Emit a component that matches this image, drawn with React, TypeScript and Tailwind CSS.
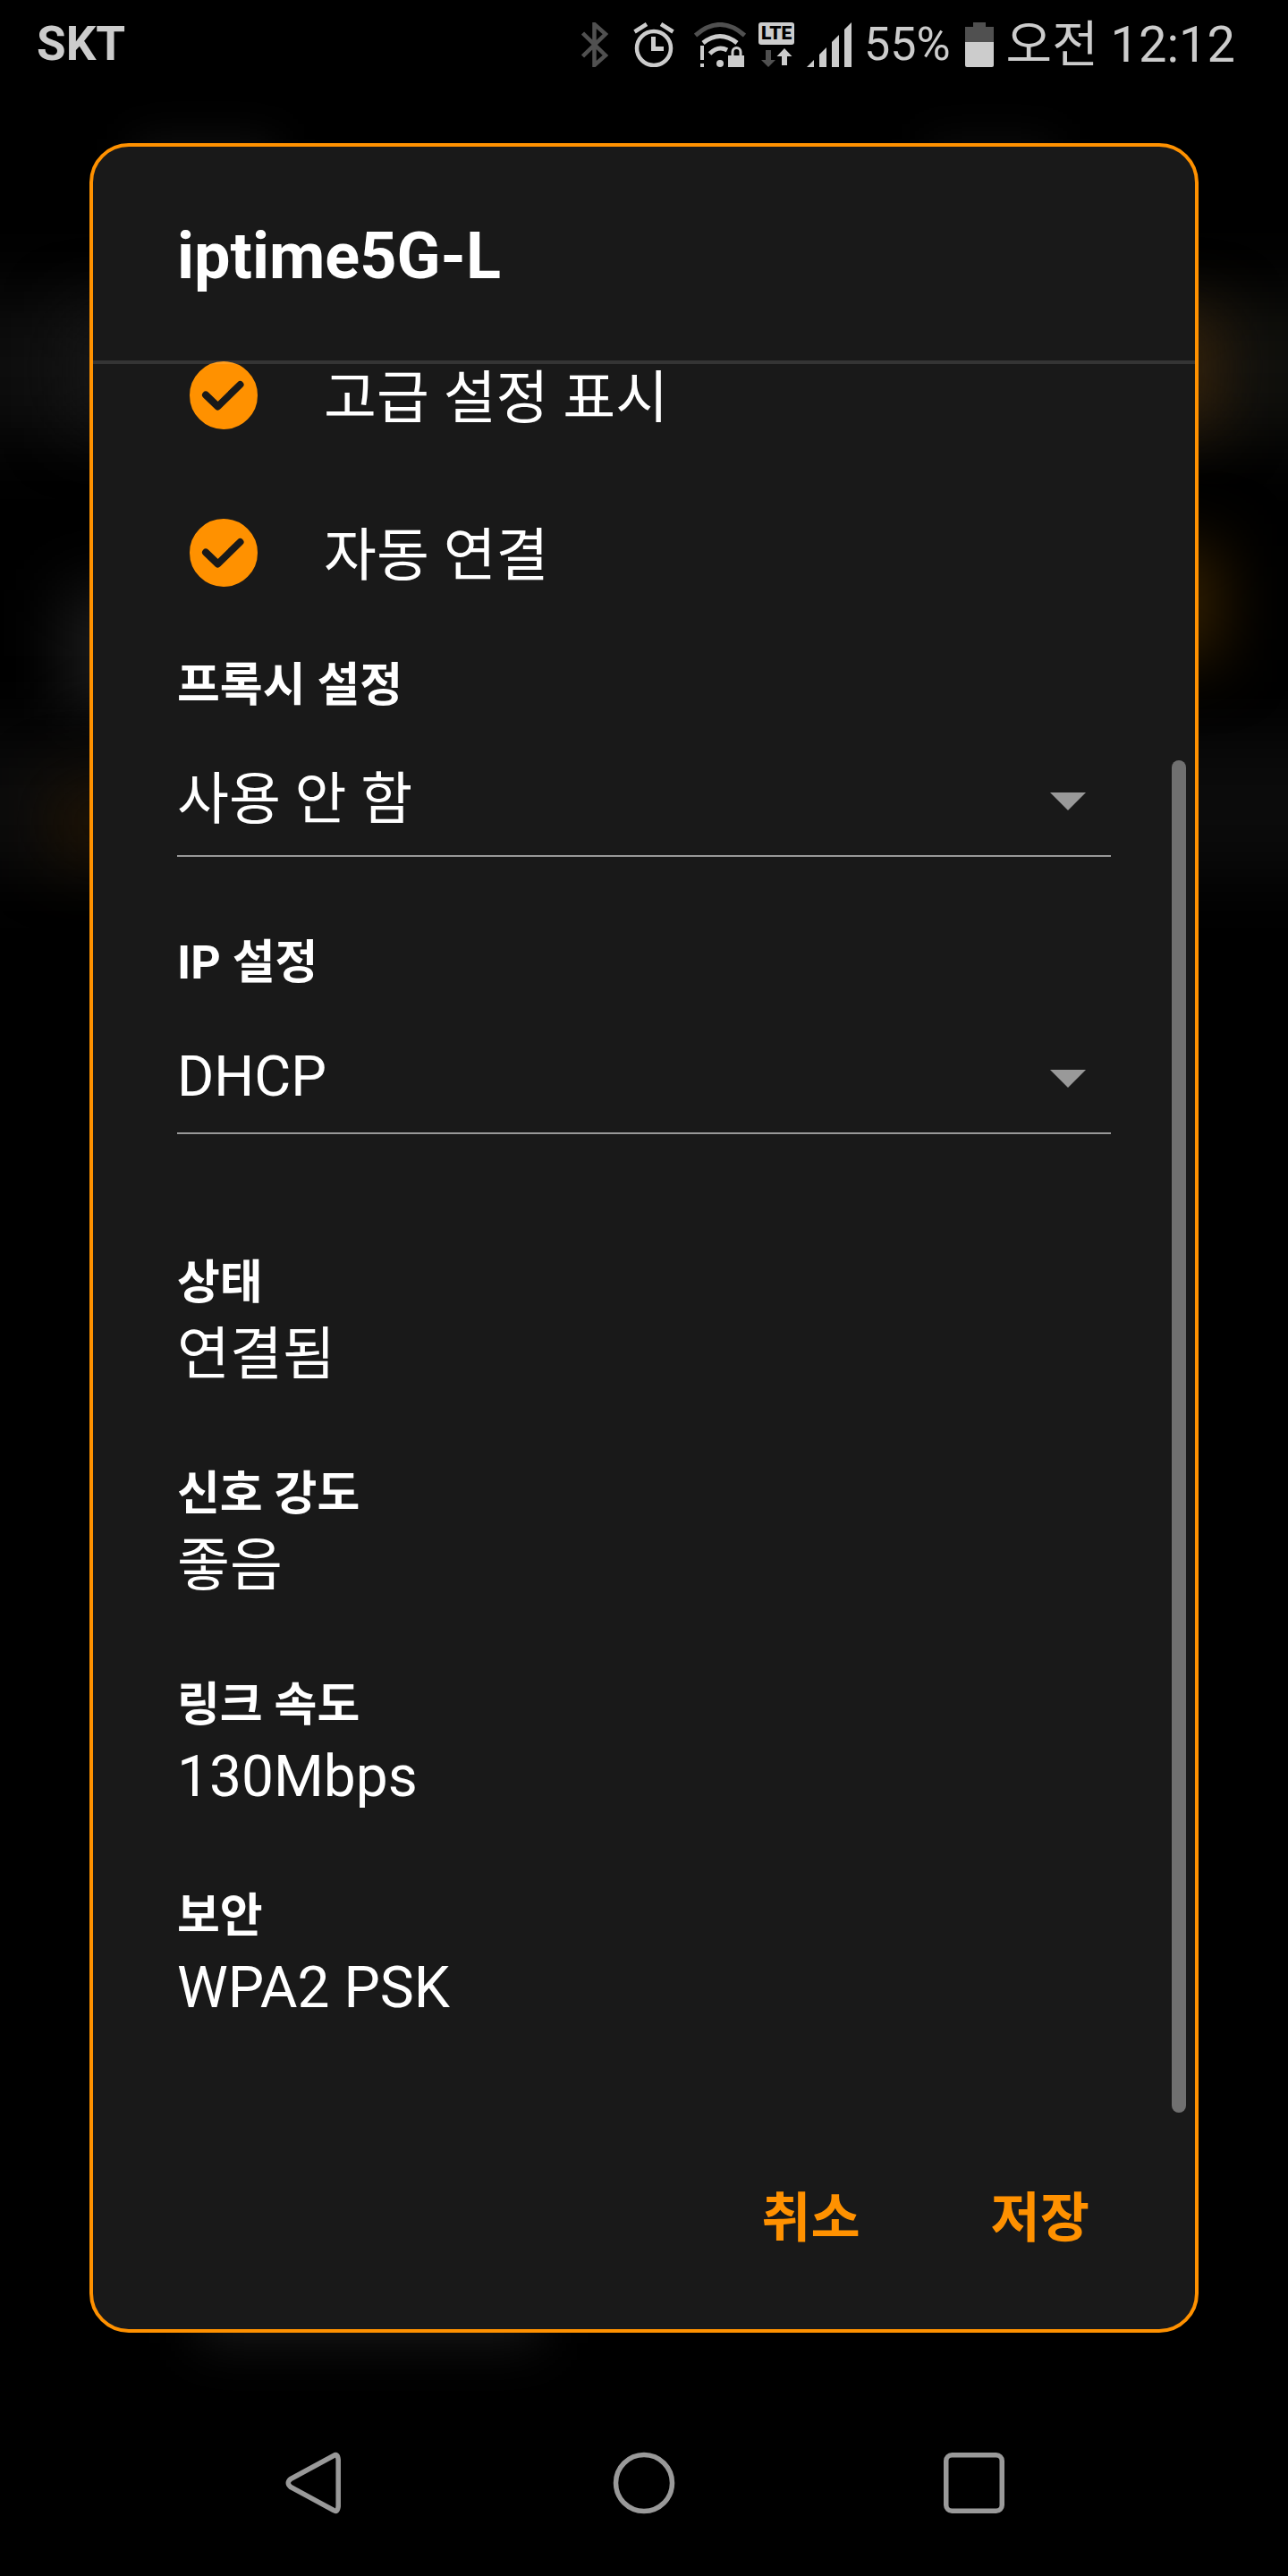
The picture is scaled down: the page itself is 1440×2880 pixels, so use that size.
import { useState } from 'react'

const fontStack = "font-['Roboto','Noto_Sans_CJK_KR',sans-serif]"

const connectionInfo = [
  { label: '상태', value: '연결됨' },
  { label: '신호 강도', value: '좋음' },
  { label: '링크 속도', value: '130Mbps' },
  { label: '보안', value: 'WPA2 PSK' },
]

function BluetoothIcon() {
  return (
    <svg width="30" height="50" viewBox="0 0 30 50" fill="none" stroke="#505050" strokeWidth="4.5" aria-hidden="true">
      <path d="M1.5 12 27 37 14.5 48V2L27 13 1.5 38" />
    </svg>
  )
}

function AlarmIcon() {
  return (
    <svg width="46" height="50" viewBox="0 0 46 50" fill="none" stroke="#cccccc" strokeWidth="4.5" aria-hidden="true">
      <circle cx="23" cy="29" r="19" />
      <path d="M1.5 10.5 15 2M31 2l13.500 8.500" />
      <path d="M22.500 16v13.500H34" strokeWidth="5" />
    </svg>
  )
}

function WifiIcon() {
  return (
    <svg width="58" height="50" viewBox="0 0 58 50" fill="none" aria-hidden="true">
      <path d="M1.500 14.500Q29-9.500 56.500 14.500" stroke="#505050" strokeWidth="5" />
      <path d="M10 23Q29 8 48 23" stroke="#cccccc" strokeWidth="5" />
      <path d="M17.500 35Q27 25.500 37 31" stroke="#cccccc" strokeWidth="5" />
      <circle cx="29" cy="46" r="4" fill="#cccccc" />
      <path d="M7 26h4v16H7zM7 46h4v4H7z" fill="#cccccc" />
      <path d="M43 38v-5a4.500 4.500 0 0 1 9 0v5" stroke="#cccccc" strokeWidth="3" />
      <path d="M38 37h18v13H38z" fill="#cccccc" />
    </svg>
  )
}

function LteIcon() {
  return (
    <div className="flex h-[50px] w-10 flex-col justify-between">
      <span className="flex h-[25px] items-center justify-center rounded-[3px] bg-[#cccccc] text-[21px] leading-[25px] font-black text-black">
        LTE
      </span>
      <svg width="40" height="21" viewBox="0 0 40 21" aria-hidden="true">
        <path d="M8 2h6v11h5l-8 8-8-8h5z" fill="#505050" />
        <path d="M26 19h6V9h5.500L29 0l-8.500 9H26z" fill="#cccccc" />
      </svg>
    </div>
  )
}

function SignalIcon() {
  return (
    <svg width="50" height="50" viewBox="0 0 50 50" fill="#cccccc" aria-hidden="true">
      <path d="M0 50 8 42v8zM14 50V36l8-8v22zM28 50V22l8-8v36zM42 50V8l8-8v50z" />
    </svg>
  )
}

function BatteryIcon() {
  return (
    <svg width="32" height="50" viewBox="0 0 32 50" aria-hidden="true">
      <path d="M9 0h14v5h9v17H0V5h9z" fill="#505050" />
      <path d="M0 22h32v26a2 2 0 0 1-2 2H2a2 2 0 0 1-2-2z" fill="#cccccc" />
    </svg>
  )
}

function StatusBar() {
  return (
    <header className="flex h-[100px] items-center justify-between pr-[59px] pl-[41px] text-[#cccccc]">
      <span className="text-[53px] font-bold">SKT</span>
      <div className="flex items-center gap-3.5">
        <div className="mr-2 flex items-center gap-7">
          <BluetoothIcon />
          <AlarmIcon />
        </div>
        <WifiIcon />
        <LteIcon />
        <SignalIcon />
        <span className="pr-0.5 text-[52px]">55%</span>
        <BatteryIcon />
        <span className="text-[56px]">오전 12:12</span>
      </div>
    </header>
  )
}

/* Blurred remains of the screen underneath the dialog */
function Backdrop() {
  return (
    <div className="absolute inset-0 -z-10 overflow-hidden" aria-hidden="true">
      <div className="absolute top-[330px] -left-20 h-40 w-1/2 bg-[#0e0e0e] blur-[40px]" />
      <div className="absolute top-[350px] left-[80px] h-32 w-80 bg-[#181818] blur-[36px]" />
      <div className="absolute top-[660px] left-[75px] h-36 w-80 bg-[#1e1e1e] blur-[36px]" />
      <div className="absolute top-[820px] -left-20 h-40 w-[120%] bg-[#0b0b0b] blur-[36px]" />
      <div className="absolute top-[880px] left-[60px] h-20 w-80 bg-[#211404] blur-[36px]" />
      <div className="absolute top-[330px] -right-20 h-40 w-1/2 bg-[#10100d] blur-[40px]" />
      <div className="absolute top-[350px] right-[80px] h-32 w-80 bg-[#38240b] blur-[36px]" />
      <div className="absolute top-[610px] right-[76px] h-32 w-80 bg-[#342000] blur-[36px]" />
      <div className="absolute top-[155px] left-[150px] h-20 w-40 bg-[#101010] blur-[24px]" />
      <div className="absolute top-[155px] right-[260px] h-20 w-36 bg-[#0c0c0c] blur-[24px]" />
      <div className="absolute top-[2540px] left-[220px] h-20 w-96 bg-[#181818] blur-[28px]" />
    </div>
  )
}

function CheckRow({ id, label }: { id: string; label: string }) {
  const [checked, setChecked] = useState(true)

  return (
    <label htmlFor={id} className="flex h-[78px] items-center gap-[74px] pl-3.5 text-[64px] leading-[78px]">
      <span className="relative size-[76px] shrink-0">
        <input
          id={id}
          type="checkbox"
          checked={checked}
          onChange={(e) => setChecked(e.target.checked)}
          className="block size-[76px] appearance-none rounded-full border-4 border-[#999999] checked:border-[#ff9100] checked:bg-[#ff9100]"
        />
        {checked && (
          <svg
            className="pointer-events-none absolute inset-0"
            viewBox="0 0 76 76"
            fill="none"
            stroke="#191919"
            strokeWidth="8"
            strokeLinecap="round"
            strokeLinejoin="round"
            aria-hidden="true"
          >
            <path d="M18 37.500 31.500 50.500 56.500 26" />
          </svg>
        )}
      </span>
      <span className="pt-2">{label}</span>
    </label>
  )
}

function SelectField({ id, label, options }: { id: string; label: string; options: string[] }) {
  return (
    <div className="flex flex-col gap-9">
      <label htmlFor={id} className="text-[52px] leading-[60px] font-bold">
        {label}
      </label>
      <div className="relative">
        <select
          id={id}
          defaultValue={options[0]}
          className="block h-[125px] w-full appearance-none border-b-2 border-[#999999] bg-transparent text-[63px] text-white outline-none"
        >
          {options.map((option) => (
            <option key={option} className="bg-[#191919]">
              {option}
            </option>
          ))}
        </select>
        <svg
          className="pointer-events-none absolute top-1/2 right-7 -translate-y-1/2"
          width="40"
          height="20"
          viewBox="0 0 40 20"
          fill="#999999"
          aria-hidden="true"
        >
          <path d="M0 0h40L20 20z" />
        </svg>
      </div>
    </div>
  )
}

function WifiDialog() {
  return (
    <section
      role="dialog"
      aria-labelledby="network-name"
      className="mx-[100px] mt-[60px] mb-16 rounded-[44px] border-4 border-[#ff9100] bg-[#191919] text-white"
    >
      <div className="relative z-10 border-b-4 border-white/12 px-[94px] pt-[81px] pb-[74px]">
        <h1 id="network-name" className="text-[72px] leading-[84px] font-bold">
          iptime5G-L
        </h1>
      </div>

      <div className="relative -mt-1 px-[94px] pb-[109px]">
        <div className="flex flex-col gap-[98px]">
          <CheckRow id="advanced" label="고급 설정 표시" />
          <CheckRow id="auto-connect" label="자동 연결" />
        </div>

        <div className="mt-20 flex flex-col gap-[89px]">
          <SelectField id="proxy" label="프록시 설정" options={['사용 안 함', '수동', '프록시 자동 설정']} />
          <SelectField id="ip" label="IP 설정" options={['DHCP', '고정']} />
        </div>

        <dl className="mt-[137px] flex flex-col gap-[88px]">
          {connectionInfo.map((item) => (
            <div key={item.label} className="flex flex-col gap-3">
              <dt className="text-[52px] leading-[60px] font-bold">{item.label}</dt>
              <dd className="text-[64px] leading-[76px]">{item.value}</dd>
            </div>
          ))}
        </dl>

        {/* Scroll thumb */}
        <div className="absolute top-[447px] right-2.5 bottom-2 w-4 rounded-full bg-[#707070]" />
      </div>

      <div className="flex justify-end gap-[66px] pt-[65px] pr-[78px] pb-[77px] text-[60px] leading-[92px] font-bold text-[#ff9100]">
        <button type="button" className="px-10">
          취소
        </button>
        <button type="button" className="px-10">
          저장
        </button>
      </div>
    </section>
  )
}

function NavigationBar() {
  return (
    <nav className="mt-auto flex h-52 items-center justify-center gap-[289px]">
      <button type="button" aria-label="뒤로">
        <svg width="80" height="80" viewBox="0 0 80 80" fill="none" stroke="#999999" strokeWidth="5.5" strokeLinejoin="round">
          <path d="M62 9.500Q66.500 6.500 67.200 14V66Q66.500 73.500 62 70.500L14 44.500Q8.500 40 14 35.500z" />
        </svg>
      </button>
      <button type="button" aria-label="홈">
        <svg width="80" height="80" viewBox="0 0 80 80" fill="none" stroke="#999999" strokeWidth="5.5">
          <circle cx="40" cy="40" r="31.500" />
        </svg>
      </button>
      <button type="button" aria-label="최근 앱">
        <svg width="80" height="80" viewBox="0 0 80 80" fill="none" stroke="#999999" strokeWidth="5.5">
          <rect x="8.750" y="8.750" width="62.500" height="62.500" rx="6.500" />
        </svg>
      </button>
    </nav>
  )
}

export default function App() {
  return (
    <div className={`relative isolate flex min-h-screen flex-col bg-black ${fontStack}`}>
      <Backdrop />
      <StatusBar />
      <WifiDialog />
      <NavigationBar />
    </div>
  )
}
